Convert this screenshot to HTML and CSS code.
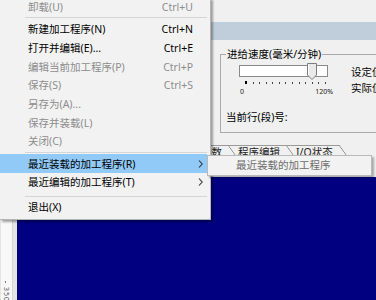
FILE: index.html
```html
<!DOCTYPE html>
<html lang="zh-CN">
<head>
<meta charset="utf-8">
<title>加工程序菜单</title>
<link rel="stylesheet" href="styles.css">
</head>
<body>
<div class="app">
  <div class="topbar"></div>
  <div class="band"></div>
  <div class="panel">
    <fieldset class="group">
      <legend>进给速度(毫米/分钟)</legend>
      <div class="row">
        <div class="slider">
          <div class="track">
            <svg class="thumb" width="10" height="17" viewBox="0 0 10 17"><path d="M0.5 0.5 H9.5 V12 L5 16.5 L0.5 12 Z" fill="#e9e9e9" stroke="#7c7c7c"/><path d="M1.5 1.5 V11.6" stroke="#fff"/></svg>
          </div>
          <div class="ticks"><i></i><i></i><i></i><i></i><i></i><i></i><i></i><i></i><i></i><i></i><i></i><i></i><i></i></div>
          <div class="scale"><span>0</span><span>120%</span></div>
        </div>
        <div class="vals"><div>设定值</div><div>实际值</div></div>
      </div>
      <div class="cur">当前行(段)号:</div>
    </fieldset>
  </div>
  <div class="tabs">
    <span class="tab">参数</span>
    <span class="tab">程序编辑</span>
    <span class="tab">I/O状态</span>
  </div>
  <div class="work">
    <div class="ruler"><div class="rscale"><b class="rtick"></b><span>350</span></div></div>
    <div class="blue"></div>
  </div>
</div>

<div class="menu">
  <div class="mi dis"><span class="lbl">卸载(U)</span><span class="key">Ctrl+U</span></div>
  <div class="sep"></div>
  <div class="mi"><span class="lbl">新建加工程序(N)</span><span class="key">Ctrl+N</span></div>
  <div class="mi"><span class="lbl">打开并编辑(E)...</span><span class="key">Ctrl+E</span></div>
  <div class="mi dis"><span class="lbl">编辑当前加工程序(P)</span><span class="key">Ctrl+P</span></div>
  <div class="mi dis"><span class="lbl">保存(S)</span><span class="key">Ctrl+S</span></div>
  <div class="mi dis"><span class="lbl">另存为(A)...</span></div>
  <div class="mi dis"><span class="lbl">保存并装载(L)</span></div>
  <div class="mi dis"><span class="lbl">关闭(C)</span></div>
  <div class="sep"></div>
  <div class="mi hl"><span class="lbl">最近装载的加工程序(R)</span><span class="arr"><svg width="5" height="8" viewBox="0 0 5 8"><path d="M1 0.5 L4.2 4 L1 7.5" fill="none" stroke="#333" stroke-width="1.1"/></svg></span></div>
  <div class="mi"><span class="lbl">最近编辑的加工程序(T)</span><span class="arr"><svg width="5" height="8" viewBox="0 0 5 8"><path d="M1 0.5 L4.2 4 L1 7.5" fill="none" stroke="#333" stroke-width="1.1"/></svg></span></div>
  <div class="sep last"></div>
  <div class="mi"><span class="lbl">退出(X)</span></div>
</div>

<div class="submenu">最近装载的加工程序</div>
</body>
</html>
```

FILE: styles.css
```css
* { box-sizing: border-box; }
html, body { margin: 0; padding: 0; }
body {
  width: 376px;
  height: 300px;
  overflow: hidden;
  position: relative;
  background: #f0f0f0;
  color: #000;
  font-family: "Noto Sans", "Noto Sans CJK SC", sans-serif;
  font-size: 10.5px;
}
.app {
  width: 376px;
  height: 300px;
  display: flex;
  flex-direction: column;
  overflow: hidden;
}
.topbar { flex: none; height: 22px; background: #f0f0f0; }
.band { flex: none; height: 18px; background: #c0cedb; }
.panel { flex: none; height: 105px; padding-top: 8px; }

.group {
  margin: 0 0 0 220px;
  padding: 0 0 8px 0;
  width: 300px;
  min-width: 0;
  border: 1px solid #a9a9a9;
}
.group legend {
  margin-left: 5px;
  padding: 0 1px;
  line-height: 12px;
  font-size: 10.5px;
}
.row { display: flex; }
.slider { flex: none; width: 94px; margin-left: 18px; padding-top: 5px; }
.track {
  position: relative;
  width: 89px;
  height: 12px;
  background: #fff;
  border: 1px solid #8a8a8a;
}
.thumb { position: absolute; left: 67px; top: -3px; display: block; }
.ticks {
  display: flex;
  justify-content: space-between;
  align-items: flex-end;
  width: 81px;
  height: 3px;
  margin: 4px 0 0 6px;
}
.ticks i { display: block; width: 1px; height: 2px; background: #444; }
.ticks i:first-child { width: 2px; height: 3px; background: #000; }
.scale {
  display: flex;
  justify-content: space-between;
  width: 93px;
  margin: 4px 0 0 1px;
  font-size: 7px;
  line-height: 8px;
  color: #222;
}
.vals { margin-left: 18px; padding-top: 4px; line-height: 16px; white-space: nowrap; }
.cur { margin: 14px 0 0 5px; line-height: 14px; }

.tabs {
  flex: none;
  height: 32px;
  display: flex;
  align-items: flex-start;
  padding-left: 191px;
}
.tab {
  flex: none;
  height: 20px;
  padding: 1px 16px 0 10px;
  line-height: 12px;
  color: #222;
  white-space: nowrap;
  background:
    linear-gradient(#9a9a9a, #9a9a9a) left top / calc(100% - 10px) 1px no-repeat,
    linear-gradient(to top right, transparent calc(50% - 0.7px), #8a8a8a 50%, transparent calc(50% + 0.7px)) right top / 10px 14px no-repeat;
}
.tab + .tab { margin-left: -10px; }

.work { flex: 1; display: flex; min-height: 0; }
.ruler { flex: none; width: 17px; background: #e4e4e4; display: flex; border-top: 1px solid #cfcfcf; }
.rscale {
  width: 12px;
  margin-left: 1px;
  background: #f8f8f8;
  border-right: 1px solid #d6d6d6;
  display: flex;
  flex-direction: column;
  justify-content: flex-end;
  align-items: flex-start;
  padding-left: 2px;
}
.rtick { display: block; width: 1px; height: 2px; background: #777; margin: 0 0 4px 2px; }
.rscale span {
  writing-mode: vertical-rl;
  font-size: 7px;
  line-height: 7px;
  letter-spacing: 1px;
  color: #555;
  margin-bottom: -2px;
}
.blue { flex: 1; background: #000080; }

.menu {
  position: absolute;
  left: 0;
  top: -2.35px;
  width: 211px;
  padding-bottom: 2.5px;
  background: #f2f2f2;
  border-right: 1px solid #b5b5b5;
  border-bottom: 1px solid #b5b5b5;
  box-shadow: 2px 2px 2px rgba(0, 0, 0, 0.35);
}
.mi {
  display: flex;
  align-items: center;
  height: 18.7px;
  margin-right: 3px;
  padding-left: 28px;
  white-space: nowrap;
  line-height: 14px;
}
.mi .lbl { flex: 1; }
.mi .key { margin-right: 14px; }
.mi .arr { flex: none; width: 14px; display: flex; justify-content: center; align-items: center; }
.mi .arr svg { display: block; }
.dis { color: #8d8d8d; }
.hl { background: #91c9f7; }
.sep { height: 1px; background: #d5d5d5; margin: 1px 3px 1.5px 25px; }
.sep.last { margin-top: 4px; margin-bottom: 1px; }

.submenu {
  position: absolute;
  left: 207px;
  top: 155px;
  width: 165px;
  height: 21px;
  padding-left: 28px;
  line-height: 19px;
  color: #6d6d6d;
  white-space: nowrap;
  background: #f2f2f2;
  border: 1px solid #b9b9b9;
  box-shadow: 2px 2px 2px rgba(0, 0, 0, 0.3);
}
```
